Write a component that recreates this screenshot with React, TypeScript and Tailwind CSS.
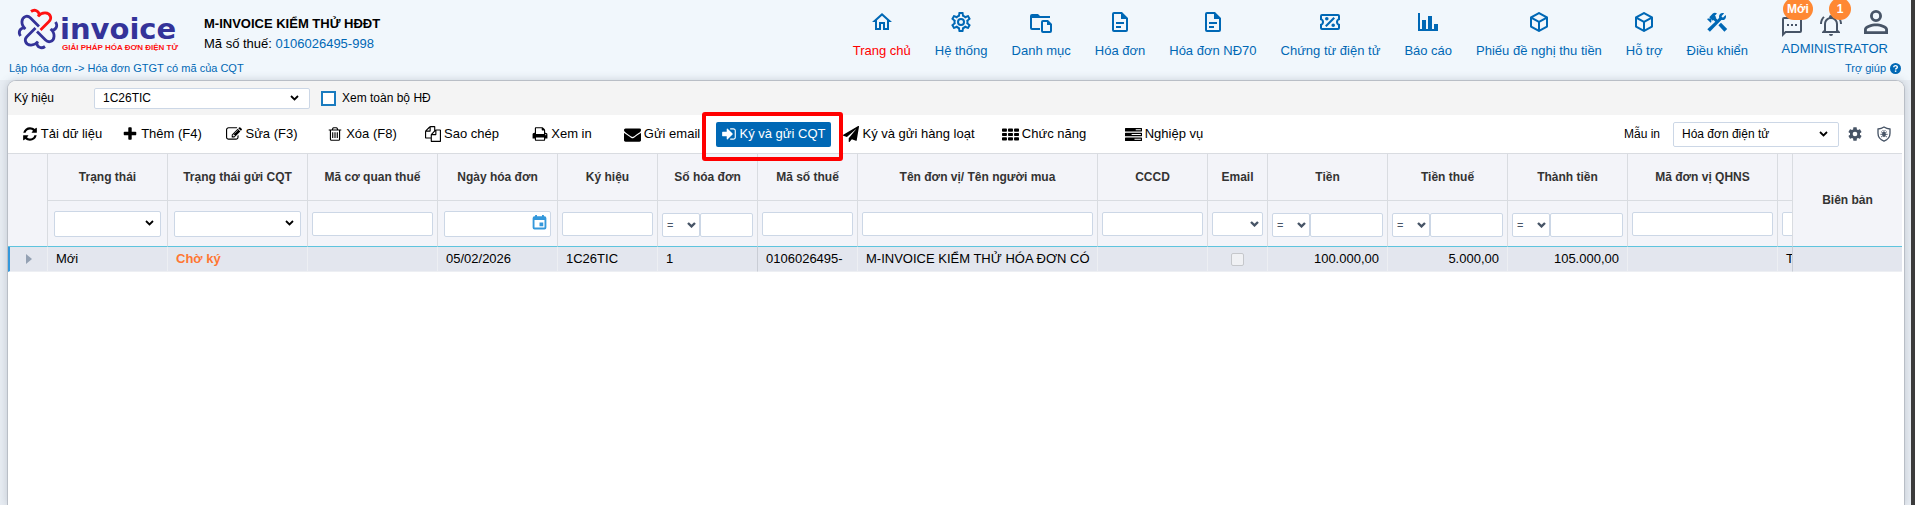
import React from "react";

type IconProps = { d: string; box?: number; className?: string };

function Icon({ d, box = 24, className = "size-6" }: IconProps) {
  return (
    <svg viewBox={`0 0 ${box} ${box}`} className={`shrink-0 ${className}`} fill="currentColor" fillRule="evenodd" aria-hidden="true">
      <path d={d} />
    </svg>
  );
}

const HOME = "M12 5.69L17 10.19V18H15V12H9V18H7V10.19L12 5.69M12 3L2 12H5V20H11V14H13V20H19V12H22L12 3Z";
const COG_OUTLINE =
  "M12,8A4,4 0 0,1 16,12A4,4 0 0,1 12,16A4,4 0 0,1 8,12A4,4 0 0,1 12,8M12,10A2,2 0 0,0 10,12A2,2 0 0,0 12,14A2,2 0 0,0 14,12A2,2 0 0,0 12,10M10,22C9.75,22 9.54,21.82 9.5,21.58L9.13,18.93C8.5,18.68 7.96,18.34 7.44,17.94L4.95,18.95C4.73,19.03 4.46,18.95 4.34,18.73L2.34,15.27C2.21,15.05 2.27,14.78 2.46,14.63L4.57,12.97L4.5,12L4.57,11L2.46,9.37C2.27,9.22 2.21,8.95 2.34,8.73L4.34,5.27C4.46,5.05 4.73,4.96 4.95,5.05L7.44,6.05C7.96,5.66 8.5,5.32 9.13,5.07L9.5,2.42C9.54,2.18 9.75,2 10,2H14C14.25,2 14.46,2.18 14.5,2.42L14.87,5.07C15.5,5.32 16.04,5.66 16.56,6.05L19.05,5.05C19.27,4.96 19.54,5.05 19.66,5.27L21.66,8.73C21.79,8.95 21.73,9.22 21.54,9.37L19.43,11L19.5,12L19.43,13L21.54,14.63C21.73,14.78 21.79,15.05 21.66,15.27L19.66,18.73C19.54,18.95 19.27,19.04 19.05,18.95L16.56,17.95C16.04,18.34 15.5,18.68 14.87,18.93L14.5,21.58C14.46,21.82 14.25,22 14,22H10M11.25,4L10.88,6.61C9.68,6.86 8.62,7.5 7.85,8.39L5.44,7.35L4.69,8.65L6.8,10.2C6.4,11.37 6.4,12.64 6.8,13.8L4.68,15.36L5.43,16.66L7.86,15.62C8.63,16.5 9.68,17.14 10.87,17.38L11.24,20H12.76L13.13,17.39C14.32,17.14 15.37,16.5 16.14,15.62L18.57,16.66L19.32,15.36L17.2,13.81C17.6,12.64 17.6,11.37 17.2,10.2L19.31,8.65L18.56,7.35L16.15,8.39C15.38,7.5 14.32,6.86 13.12,6.62L12.75,4H11.25Z";
const FOLDER_FILE =
  "M3 4A2 2 0 0 0 1 6V18A2 2 0 0 0 3 20H11V18H3V8H21V6H11L9 4H3ZM14 10A2 2 0 0 0 12 12V21A2 2 0 0 0 14 23H21A2 2 0 0 0 23 21V14L19 10H14ZM14 12H18V15H21V21H14V12Z";
const DOCUMENT =
  "M6,2A2,2 0 0,0 4,4V20A2,2 0 0,0 6,22H18A2,2 0 0,0 20,20V8L14,2H6M6,4H13V9H18V20H6V4M8,12V14H16V12H8M8,16V18H13V16H8Z";
const TICKET =
  "M4 4A2 2 0 0 0 2 6V10A2 2 0 0 1 2 14V18A2 2 0 0 0 4 20H20A2 2 0 0 0 22 18V14A2 2 0 0 1 22 10V6A2 2 0 0 0 20 4H4ZM4 6H20V8.5A4 4 0 0 0 20 15.5V18H4V15.5A4 4 0 0 0 4 8.5V6ZM15.5 7L17 8.5L8.5 17L7 15.5ZM8.8 7A1.8 1.8 0 1 1 8.8 10.6A1.8 1.8 0 0 1 8.8 7ZM15.2 13.4A1.8 1.8 0 1 1 15.2 17A1.8 1.8 0 0 1 15.2 13.4Z";
const CHART = "M22,21H2V3H4V19H6V10H10V19H12V6H16V19H18V14H22V21Z";
const CUBE =
  "M21,16.5C21,16.88 20.79,17.21 20.47,17.38L12.57,21.82C12.41,21.94 12.21,22 12,22C11.79,22 11.59,21.94 11.43,21.82L3.53,17.38C3.21,17.21 3,16.88 3,16.5V7.5C3,7.12 3.21,6.79 3.53,6.62L11.43,2.18C11.59,2.06 11.79,2 12,2C12.21,2 12.41,2.06 12.57,2.18L20.47,6.62C20.79,6.79 21,7.12 21,7.5V16.5M12,4.15L6.04,7.5L12,10.85L17.96,7.5L12,4.15M5,15.91L11,19.29V12.58L5,9.21V15.91M19,15.91V9.21L13,12.58V19.29L19,15.91Z";
const TOOLS =
  "M13.4 15.3L19.4 21.7L22.2 18.9L16 12.8L13.4 15.3M17.5 10.1C17.11 10.1 16.69 10.05 16.36 9.91L4.9 21.8L2.3 19.2L10.27 11.74L8.5 9.96L7.78 10.66L6.33 9.25V12.11L5.63 12.81L2.11 9.25L2.81 8.55H5.62L4.22 7.14L7.78 3.58C8.95 2.41 10.83 2.41 12 3.58L9.89 5.74L11.3 7.14L10.59 7.85L12.38 9.63L14.2 7.75C14.06 7.42 14 7 14 6.63C14 4.66 15.56 3.11 17.5 3.11C18.09 3.11 18.61 3.25 19.08 3.53L16.41 6.2L17.91 7.7L20.58 5.03C20.86 5.5 21 6 21 6.63C21 8.55 19.45 10.1 17.5 10.1Z";
const MESSAGE =
  "M4 2A2 2 0 0 0 2 4V22L6 18H20A2 2 0 0 0 22 16V4A2 2 0 0 0 20 2H4ZM4 4H20V16H5.2L4 17.2V4ZM7 9H9V11H7ZM11 9H13V11H11ZM15 9H17V11H15Z";
const BELL =
  "M10,21H14A2,2 0 0,1 12,23A2,2 0 0,1 10,21M21,19V20H3V19L5,17V11C5,7.9 7.03,5.17 10,4.29C10,4.19 10,4.1 10,4A2,2 0 0,1 12,2A2,2 0 0,1 14,4C14,4.1 14,4.19 14,4.29C16.97,5.17 19,7.9 19,11V17L21,19M17,11A5,5 0 0,0 12,6A5,5 0 0,0 7,11V18H17V11M19.75,3.19L18.33,4.61C20.04,6.3 21,8.6 21,11H23C23,8.07 21.84,5.25 19.75,3.19M1,11H3C3,8.6 3.96,6.3 5.67,4.61L4.25,3.19C2.16,5.25 1,8.07 1,11Z";
const ACCOUNT =
  "M12,4A4,4 0 0,1 16,8A4,4 0 0,1 12,12A4,4 0 0,1 8,8A4,4 0 0,1 12,4M12,5.9A2.1,2.1 0 0,0 9.9,8A2.1,2.1 0 0,0 12,10.1A2.1,2.1 0 0,0 14.1,8A2.1,2.1 0 0,0 12,5.9M12,13C14.67,13 20,14.33 20,17V20H4V17C4,14.33 9.33,13 12,13M12,14.9C9.03,14.9 5.9,16.36 5.9,17V18.1H18.1V17C18.1,16.36 14.97,14.9 12,14.9Z";
const COG =
  "M12,15.5A3.5,3.5 0 0,1 8.5,12A3.5,3.5 0 0,1 12,8.5A3.5,3.5 0 0,1 15.5,12A3.5,3.5 0 0,1 12,15.5M19.43,12.97C19.47,12.65 19.5,12.33 19.5,12C19.5,11.67 19.47,11.34 19.43,11L21.54,9.37C21.73,9.22 21.78,8.95 21.66,8.73L19.66,5.27C19.54,5.05 19.27,4.96 19.05,5.05L16.56,6.05C16.04,5.66 15.5,5.32 14.87,5.07L14.5,2.42C14.46,2.18 14.25,2 14,2H10C9.75,2 9.54,2.18 9.5,2.42L9.13,5.07C8.5,5.32 7.96,5.66 7.44,6.05L4.95,5.05C4.73,4.96 4.46,5.05 4.34,5.27L2.34,8.73C2.21,8.95 2.27,9.22 2.46,9.37L4.57,11C4.53,11.34 4.5,11.67 4.5,12C4.5,12.33 4.53,12.65 4.57,12.97L2.46,14.63C2.27,14.78 2.21,15.05 2.34,15.27L4.34,18.73C4.46,18.95 4.73,19.03 4.95,18.95L7.44,17.94C7.96,18.34 8.5,18.68 9.13,18.93L9.5,21.58C9.54,21.82 9.75,22 10,22H14C14.25,22 14.46,21.82 14.5,21.58L14.87,18.93C15.5,18.67 16.04,18.34 16.56,17.94L19.05,18.95C19.27,19.03 19.54,18.95 19.66,18.73L21.66,15.27C21.78,15.05 21.73,14.78 21.54,14.63L19.43,12.97Z";

const REFRESH =
  "M1639 1056q0 5-1 7-64 268-268 434.5t-478 166.5q-146 0-282.5-55t-243.5-157l-129 129q-19 19-45 19t-45-19-19-45v-448q0-26 19-45t45-19h448q26 0 45 19t19 45-19 45l-137 137q71 66 161 102t187 36q134 0 250-65t186-179q11-17 53-117 8-23 30-23h192q13 0 22.5 9.5t9.5 22.5zm25-800v448q0 26-19 45t-45 19h-448q-26 0-45-19t-19-45 19-45l138-138q-148-137-349-137-134 0-250 65t-186 179q-11 17-53 117-8 23-30 23h-199q-13 0-22.5-9.5t-9.5-22.5v-7q65-268 270-434.5t480-166.5q146 0 284 55.5t245 156.5l130-129q19-19 45-19t45 19 19 45z";
const PLUS =
  "M1600 736v192q0 40-28 68t-68 28h-416v416q0 40-28 68t-68 28h-192q-40 0-68-28t-28-68v-416h-416q-40 0-68-28t-28-68v-192q0-40 28-68t68-28h416v-416q0-40 28-68t68-28h192q40 0 68 28t28 68v416h416q40 0 68 28t28 68z";
const EDIT =
  "M888 1184l116-116-152-152-116 116v56h96v96h56zm440-720q-16-16-33 1l-350 350q-17 17-1 33t33-1l350-350q17-17 1-33zm80 594v190q0 119-84.5 203.5t-203.5 84.5h-832q-119 0-203.5-84.5t-84.5-203.5v-832q0-119 84.5-203.5t203.5-84.5h832q63 0 117 25 15 7 18 23 3 17-9 29l-49 49q-14 14-32 8-23-6-45-6h-832q-66 0-113 47t-47 113v832q0 66 47 113t113 47h832q66 0 113-47t47-113v-126q0-13 9-22l64-64q15-15 35-7t20 29zm-96-738l288 288-672 672h-288v-288zm444 132l-92 92-288-288 92-92q28-28 68-28t68 28l152 152q28 28 28 68t-28 68z";
const TRASH =
  "M704 736v576q0 14-9 23t-23 9h-64q-14 0-23-9t-9-23v-576q0-14 9-23t23-9h64q14 0 23 9t9 23zm256 0v576q0 14-9 23t-23 9h-64q-14 0-23-9t-9-23v-576q0-14 9-23t23-9h64q14 0 23 9t9 23zm256 0v576q0 14-9 23t-23 9h-64q-14 0-23-9t-9-23v-576q0-14 9-23t23-9h64q14 0 23 9t9 23zm128 724v-948h-896v948q0 22 7 40.5t14.5 27 10.5 8.5h832q3 0 10.5-8.5t14.5-27 7-40.5zm-672-1076h448l-48-117q-7-9-17-11h-317q-10 2-17 11zm928 32v64q0 14-9 23t-23 9h-96v948q0 83-47 143.5t-113 60.5h-832q-66 0-113-58.5t-47-141.5v-952h-96q-14 0-23-9t-9-23v-64q0-14 9-23t23-9h309l70-167q15-37 54-63t79-26h320q40 0 79 26t54 63l70 167h309q14 0 23 9t9 23z";
const COPY =
  "M1696 384q40 0 68 28t28 68v1216q0 40-28 68t-68 28h-960q-40 0-68-28t-28-68v-288h-544q-40 0-68-28t-28-68v-672q0-40 20-88t48-76l408-408q28-28 76-48t88-20h416q40 0 68 28t28 68v328q68-40 128-40h416zm-544 213l-299 299h299v-299zm-640-384l-299 299h299v-299zm196 647l316-316v-416h-384v416q0 40-28 68t-68 28h-416v640h512v-256q0-40 20-88t48-76zm956 804v-1152h-384v416q0 40-28 68t-68 28h-416v640h896z";
const PRINT =
  "M448 1536h896v-256h-896v256zm0-640h896v-384h-160q-40 0-68-28t-28-68v-160h-640v640zm1152 64q0-26-19-45t-45-19-45 19-19 45 19 45 45 19 45-19 19-45zm128 0v416q0 13-9.5 22.5t-22.5 9.5h-224v160q0 40-28 68t-68 28h-960q-40 0-68-28t-28-68v-160h-224q-13 0-22.5-9.5t-9.5-22.5v-416q0-79 56.5-135.5t135.5-56.5h64v-544q0-40 28-68t68-28h672q40 0 88 20t76 48l152 152q28 28 48 76t20 88v256h64q79 0 135.5 56.5t56.5 135.5z";
const ENVELOPE =
  "M1792 710v794q0 66-47 113t-113 47h-1472q-66 0-113-47t-47-113v-794q44 49 101 87 362 246 497 345 57 42 92.5 65.5t94.5 48 110 24.5h2q51 0 110-24.5t94.5-48 92.5-65.5q170-123 498-345 57-39 100-87zm0-294q0 79-49 151t-122 123q-376 261-468 325-10 7-42.5 31t-54 38.5-52 32.5-57.5 27-50 9h-2q-23 0-50-9t-57.5-27-52-32.5-54-38.5-42.5-31q-91-64-262-182.5t-205-142.5q-62-42-117-115.5t-55-136.5q0-78 41.5-130t118.5-52h1472q65 0 112.5 47t47.5 113z";
const SIGN_IN =
  "M1312 896q0 26-19 45l-544 544q-19 19-45 19t-45-19-19-45v-288h-448q-26 0-45-19t-19-45v-384q0-26 19-45t45-19h448v-288q0-26 19-45t45-19 45 19l544 544q19 19 19 45zm352-352v704q0 119-84.5 203.5t-203.5 84.5h-320q-13 0-22.5-9.5t-9.5-22.5q0-4-1-20t-.5-26.5 3-23.5 10-19.5 20.5-6.5h320q66 0 113-47t47-113v-704q0-66-47-113t-113-47h-312l-11.5-1-11.5-3-8-5.5-7-9-2-13.5q0-4-1-20t-.5-26.5 3-23.5 10-19.5 20.5-6.5h320q119 0 203.5 84.5t84.5 203.5z";
const PLANE =
  "M1764 11q33 24 27 64l-256 1536q-5 29-32 45-14 8-31 8-11 0-24-5l-453-185-242 295q-18 23-49 23-13 0-22-4-19-7-30.5-23.5t-11.5-36.5v-349l864-1059-1069 925-395-162q-37-14-40-55-2-40 32-59l1664-960q15-9 32-9 20 0 36 11z";
const GRID =
  "M80 256h360q80 0 80 80v180q0 80-80 80h-360q-80 0-80-80v-180q0-80 80-80zM716 256h360q80 0 80 80v180q0 80-80 80h-360q-80 0-80-80v-180q0-80 80-80zM1352 256h360q80 0 80 80v180q0 80-80 80h-360q-80 0-80-80v-180q0-80 80-80zM80 726h360q80 0 80 80v180q0 80-80 80h-360q-80 0-80-80v-180q0-80 80-80zM716 726h360q80 0 80 80v180q0 80-80 80h-360q-80 0-80-80v-180q0-80 80-80zM1352 726h360q80 0 80 80v180q0 80-80 80h-360q-80 0-80-80v-180q0-80 80-80zM80 1196h360q80 0 80 80v180q0 80-80 80h-360q-80 0-80-80v-180q0-80 80-80zM716 1196h360q80 0 80 80v180q0 80-80 80h-360q-80 0-80-80v-180q0-80 80-80zM1352 1196h360q80 0 80 80v180q0 80-80 80h-360q-80 0-80-80v-180q0-80 80-80z";
const TASKS =
  "M60 210h1672q60 0 60 60v260q0 60-60 60h-1672q-60 0-60-60v-260q0-60 60-60zM1130 340v120h540v-120zM60 710h1672q60 0 60 60v260q0 60-60 60h-1672q-60 0-60-60v-260q0-60 60-60zM700 840v120h970v-120zM60 1210h1672q60 0 60 60v260q0 60-60 60h-1672q-60 0-60-60v-260q0-60 60-60zM1000 1340v120h670v-120z";
const CALENDAR =
  "M5 0h3v2h8V0h3v2h1a3 3 0 0 1 3 3v15a3 3 0 0 1-3 3H4a3 3 0 0 1-3-3V5a3 3 0 0 1 3-3h1V0ZM4 8v12h16V8H4ZM12 12h6v6h-6v-6Z";

const PETAL = "M-7 -17.500 C-3.500 -20 1.200 -18.500 1.200 -13.500 M0 -12.500 C4 -17.500 11 -17 12.500 -12.500 C13.200 -10.300 12.500 -9 11 -7.500 L2.500 1";

function Logo() {
  return (
    <a href="#home" aria-label="invoice" className="block shrink-0">
      <svg width="164" height="48" viewBox="0 0 164 48" aria-hidden="true">
        <g transform="translate(23 24)" fill="none" strokeWidth="2.800">
          <path d={PETAL} stroke="#ff1111" />
          <path d={PETAL} stroke="#343399" transform="rotate(90)" />
          <path d={PETAL} stroke="#343399" transform="rotate(180)" />
          <path d={PETAL} stroke="#343399" transform="rotate(270)" />
        </g>
        <text x="45" y="34" fontSize="29" fontWeight="700" fill="#343399" className="font-['DejaVu_Sans',sans-serif]">
          invoice
        </text>
        <text x="47" y="45" fontSize="8" fontWeight="700" fill="#ff1111" className="font-['Liberation_Sans',sans-serif]">
          GIẢI PHÁP HÓA ĐƠN ĐIỆN TỬ
        </text>
      </svg>
    </a>
  );
}

function Chevron({ className }: { className: string }) {
  return (
    <svg viewBox="0 0 9 6" className={`pointer-events-none absolute h-[6px] w-[9px] ${className}`} fill="none" stroke="currentColor" aria-hidden="true">
      <path d="M1 1L4.500 4.400L8 1" />
    </svg>
  );
}

const NAV: [string, string][] = [
  ["Trang chủ", HOME],
  ["Hệ thống", COG_OUTLINE],
  ["Danh mục", FOLDER_FILE],
  ["Hóa đơn", DOCUMENT],
  ["Hóa đơn NĐ70", DOCUMENT],
  ["Chứng từ điện tử", TICKET],
  ["Báo cáo", CHART],
  ["Phiếu đề nghị thu tiền", CUBE],
  ["Hỗ trợ", CUBE],
  ["Điều khiển", TOOLS],
];

function Header() {
  return (
    <header className="flex h-[60px] items-start pl-[15px] pr-[23px]">
      <div className="pt-[5px]">
        <Logo />
      </div>
      <div className="pl-[25px] pt-[14px] leading-5 text-black">
        <h1 className="font-bold">M-INVOICE KIỂM THỬ HĐĐT</h1>
        <p>
          Mã số thuế: <span className="text-[#0068b5]">0106026495-998</span>
        </p>
      </div>
      <nav className="ml-auto flex gap-6 pt-[10px]">
        {NAV.map(([label, d], i) => (
          <a key={label} href="#" className="flex flex-col items-center gap-[7px] whitespace-nowrap leading-5 text-[#0068b5]">
            <Icon d={d} />
            <span className={i === 0 ? "text-[#ff0000]" : ""}>{label}</span>
          </a>
        ))}
      </nav>
      <div className="ml-8 flex flex-col items-end">
        <div className="flex h-[39px] items-start text-[#475466]">
          <button type="button" aria-label="Tin nhắn" className="relative mt-[15px]">
            <Icon d={MESSAGE} />
            <span className="absolute -top-[17px] left-[3px] rounded-full bg-[#ff8833] px-1 text-[12px] font-bold leading-[22px] text-white">Mới</span>
          </button>
          <button type="button" aria-label="Thông báo" className="relative ml-[15px] mt-[13px]">
            <Icon d={BELL} />
            <span className="absolute -top-[15px] left-[10px] w-[22px] rounded-full bg-[#ff8833] text-center text-[12px] font-bold leading-[22px] text-white">1</span>
          </button>
          <button type="button" aria-label="Tài khoản" className="-mr-[6px] ml-[15px] mt-[4px]">
            <Icon d={ACCOUNT} className="size-9" />
          </button>
        </div>
        <a href="#" className="leading-5 text-[#0068b5]">ADMINISTRATOR</a>
      </div>
    </header>
  );
}

const TOOLBAR: [string, string, string, string][] = [
  ["Tải dữ liệu", REFRESH, "w-[100px]", "size-4"],
  ["Thêm (F4)", PLUS, "w-[100px]", "size-4"],
  ["Sửa (F3)", EDIT, "w-[100px]", "size-4"],
  ["Xóa (F8)", TRASH, "w-[100px]", "size-4"],
  ["Sao chép", COPY, "w-[100px]", "size-4"],
  ["Xem in", PRINT, "w-[100px]", "size-4"],
  ["Gửi email", ENVELOPE, "w-[100px]", "size-[17px]"],
  ["Ký và gửi CQT", SIGN_IN, "w-[122px]", "size-4"],
  ["Ký và gửi hàng loạt", PLANE, "w-[150px]", "size-4"],
  ["Chức năng", GRID, "w-[120px]", "size-[17px]"],
  ["Nghiệp vụ", TASKS, "w-[120px]", "size-[17px]"],
];

function Toolbar() {
  return (
    <div className="flex h-[38px] items-center bg-white pl-1 pr-3 text-black">
      {TOOLBAR.map(([label, d, width, size]) =>
        d === SIGN_IN ? (
          <div key={label} className={`relative flex shrink-0 justify-center ${width}`}>
            <button type="button" className="flex h-[25px] items-center gap-[3px] whitespace-nowrap rounded-[2px] bg-[#0068b5] px-[5px] text-white">
              <Icon d={d} box={1792} className={size} />
              {label}
            </button>
            <span className="pointer-events-none absolute -bottom-[14px] -left-[10px] -right-[9px] -top-[10px] z-10 rounded-[3px] border-4 border-[#ff0000]" />
          </div>
        ) : (
          <button key={label} type="button" className={`flex shrink-0 items-center justify-center gap-[3px] whitespace-nowrap ${width}`}>
            <Icon d={d} box={1792} className={size} />
            {label}
          </button>
        )
      )}
      <label htmlFor="template" className="ml-auto text-[12px]">Mẫu in</label>
      <div className="relative ml-[13px] w-[166px]">
        <select id="template" className="h-[25px] w-full appearance-none rounded-[2px] border border-[#ccd7e6] bg-white px-2 text-[12px] leading-5">
          <option>Hóa đơn điện tử</option>
        </select>
        <Chevron className="right-[11px] top-[9px] stroke-[1.8px]" />
      </div>
      <button type="button" aria-label="Cấu hình" className="ml-2 text-[#475466]">
        <Icon d={COG} className="size-4" />
      </button>
      <button type="button" aria-label="Bảo mật" className="ml-[13px] text-[#475466]">
        <svg viewBox="0 0 24 24" className="size-4" fill="none" stroke="currentColor" strokeWidth="2" aria-hidden="true">
          <path d="M12 1.500C9 3.500 6 4.300 3 4.500V11C3 16.500 6.500 20.800 12 22.800C17.500 20.800 21 16.500 21 11V4.500C18 4.300 15 3.500 12 1.500Z" />
          <path d="M7.500 8.500L10 10M6.500 12.500H17.500M7.500 16.500L10 15M16.500 8.500L14 10M16.500 16.500L14 15M10.200 6L11 8M13.800 6L13 8" strokeWidth="1.300" />
          <ellipse cx="12" cy="12.500" rx="2.800" ry="4.200" fill="currentColor" stroke="none" />
        </svg>
      </button>
    </div>
  );
}

type Filter = "select" | "text" | "date" | "number" | "email";
type Column = { title: string; width: string; filter: Filter; value: string; style?: string };

const COLUMNS: Column[] = [
  { title: "Trạng thái", width: "w-[120px]", filter: "select", value: "Mới" },
  { title: "Trạng thái gửi CQT", width: "w-[140px]", filter: "select", value: "Chờ ký", style: "font-bold text-[#ff7733]" },
  { title: "Mã cơ quan thuế", width: "w-[130px]", filter: "text", value: "" },
  { title: "Ngày hóa đơn", width: "w-[120px]", filter: "date", value: "05/02/2026" },
  { title: "Ký hiệu", width: "w-[100px]", filter: "text", value: "1C26TIC" },
  { title: "Số hóa đơn", width: "w-[100px]", filter: "number", value: "1", style: "border-r-[#c9cdd5]" },
  { title: "Mã số thuế", width: "w-[100px]", filter: "text", value: "0106026495-" },
  { title: "Tên đơn vị/ Tên người mua", width: "", filter: "text", value: "M-INVOICE KIỂM THỬ HÓA ĐƠN CÓ" },
  { title: "CCCD", width: "w-[110px]", filter: "text", value: "" },
  { title: "Email", width: "w-[60px]", filter: "email", value: "" },
  { title: "Tiền", width: "w-[120px]", filter: "number", value: "100.000,00", style: "text-right" },
  { title: "Tiền thuế", width: "w-[120px]", filter: "number", value: "5.000,00", style: "text-right" },
  { title: "Thành tiền", width: "w-[120px]", filter: "number", value: "105.000,00", style: "text-right" },
  { title: "Mã đơn vị QHNS", width: "w-[150px]", filter: "text", value: "" },
  { title: "", width: "w-[15px]", filter: "text", value: "T", style: "border-r-[#c9cdd5]" },
];

const FIELD = "rounded-[2px] border border-[#ccd7e6] bg-white";

function FilterField({ kind, label }: { kind: Filter; label: string }) {
  const name = `Lọc ${label}`;
  if (kind === "select")
    return (
      <div className="relative mx-[6px]">
        <select aria-label={name} className={`block h-[26px] w-full appearance-none ${FIELD}`} />
        <Chevron className="right-[7px] top-[9px] stroke-[1.8px] text-black" />
      </div>
    );
  if (kind === "date")
    return (
      <div className="relative mx-[6px]">
        <input aria-label={name} className={`block h-[26px] w-full ${FIELD}`} />
        <Icon d={CALENDAR} className="pointer-events-none absolute right-1 top-1 size-[15px] text-[#3498db]" />
      </div>
    );
  if (kind === "email")
    return (
      <div className="relative mx-1">
        <select aria-label={name} className={`block h-6 w-full appearance-none ${FIELD}`} />
        <Chevron className="right-1 top-[9px] stroke-[2.4px] text-[#475466]" />
      </div>
    );
  if (kind === "number")
    return (
      <div className="mx-1 flex pt-[2px]">
        <div className="relative w-[38px] shrink-0">
          <select aria-label={`Phép so sánh ${label}`} className={`block h-6 w-full appearance-none px-1 text-[11px] leading-4 text-[#475466] ${FIELD}`}>
            <option>=</option>
          </select>
          <Chevron className="right-1 top-[9px] stroke-[2.4px] text-[#475466]" />
        </div>
        <input aria-label={name} className={`h-6 w-full min-w-0 ${FIELD}`} />
      </div>
    );
  return (
    <div className="mx-1">
      <input aria-label={name} className={`block h-6 w-full min-w-5 ${FIELD}`} />
    </div>
  );
}

function Grid() {
  return (
    <table className="w-full table-fixed border-separate border-spacing-0 text-black">
      <colgroup>
        <col className="w-10" />
        {COLUMNS.map((c, i) => (
          <col key={i} className={c.width} />
        ))}
        <col className="w-[109px]" />
      </colgroup>
      <thead className="bg-[#f3f4f9] text-[12px] text-[#333333]">
        <tr className="h-[48px]">
          <th rowSpan={2} aria-label="Chọn" className="border-b border-r border-t border-[#d9dce1] border-b-[#5ec4de]" />
          {COLUMNS.map((c, i) => (
            <th key={i} className="overflow-hidden whitespace-nowrap border-b border-r border-t border-[#d9dce1] p-0 font-bold">
              {c.title}
            </th>
          ))}
          <th rowSpan={2} className="border-b border-t border-[#d9dce1] border-b-[#5ec4de] p-0 font-bold">Biên bản</th>
        </tr>
        <tr className="h-[46px]">
          {COLUMNS.map((c, i) => (
            <td key={i} className="overflow-hidden border-b border-r border-[#d9dce1] border-b-[#5ec4de] p-0">
              <FilterField kind={c.filter} label={c.title || "cột khác"} />
            </td>
          ))}
        </tr>
      </thead>
      <tbody>
        <tr className="h-[25px] bg-[#e3e6ee]">
          <td className="border-b border-l-2 border-r border-[#edeff3] border-l-[#3498db] p-0">
            <svg viewBox="0 0 6 10" className="mx-auto h-[10px] w-[6px] fill-[#94a1b3]" aria-hidden="true">
              <path d="M0 0L6 5L0 10Z" />
            </svg>
          </td>
          {COLUMNS.map((c, i) => (
            <td key={i} className={`overflow-hidden whitespace-nowrap border-b border-r border-[#edeff3] px-2 py-0 leading-5 ${c.style ?? ""}`}>
              {c.filter === "email" ? (
                <input type="checkbox" disabled aria-label="Đã gửi email" className="mx-auto block size-[13px] appearance-none rounded-[2px] border border-[#c5c7cb] bg-[#f0f1f4]" />
              ) : (
                c.value
              )}
            </td>
          ))}
          <td className="border-b border-[#edeff3]" />
        </tr>
      </tbody>
    </table>
  );
}

export default function App() {
  return (
    <div className="flex h-screen flex-col overflow-hidden border-r-4 border-[#3b3b3b] bg-[#e8edf3] font-['Liberation_Sans',Arial,sans-serif] text-[13px]">
      <div className="bg-[#f1f7fc]">
        <Header />
        <div className="flex h-5 items-center justify-between pb-1 pl-[9px] pr-[10px] text-[11px] text-[#0068b5]">
          <span>Lập hóa đơn -&gt; Hóa đơn GTGT có mã của CQT</span>
          <a href="#" className="flex items-center gap-1">
            Trợ giúp
            <svg viewBox="0 0 12 12" className="size-[11px]" aria-hidden="true">
              <circle cx="6" cy="6" r="6" fill="#0068b5" />
              <path d="M4.100 4.600C4.100 2.300 8 2.400 8 4.500C8 5.800 6.100 5.900 6.100 7.200" fill="none" stroke="#ffffff" strokeWidth="1.500" />
              <rect x="5.300" y="8.100" width="1.600" height="1.600" fill="#ffffff" />
            </svg>
          </a>
        </div>
      </div>
      <main className="ml-[7px] mr-[6px] flex-1 overflow-hidden rounded-t-[9px] border border-b-0 border-[#b9bec6] bg-white shadow-[0_0_8px_rgba(80,90,110,0.25)]">
        <div className="flex h-[34px] items-center bg-[#f4f4f4] pl-[6px] text-[12px] text-black">
          <label htmlFor="symbol" className="w-[80px]">Ký hiệu</label>
          <div className="relative w-[216px]">
            <select id="symbol" className="block h-[21px] w-full appearance-none rounded-[2px] border border-[#ccd7e6] bg-white px-2 text-[12px] leading-4">
              <option>1C26TIC</option>
            </select>
            <Chevron className="right-[11px] top-[7px] stroke-[1.8px]" />
          </div>
          <input id="all" type="checkbox" className="ml-[11px] size-[15px] appearance-none border-2 border-[#1a7bbf] bg-white" />
          <label htmlFor="all" className="pl-[6px]">Xem toàn bộ HĐ</label>
        </div>
        <Toolbar />
        <div className="pr-[2px]">
          <Grid />
        </div>
      </main>
    </div>
  );
}
